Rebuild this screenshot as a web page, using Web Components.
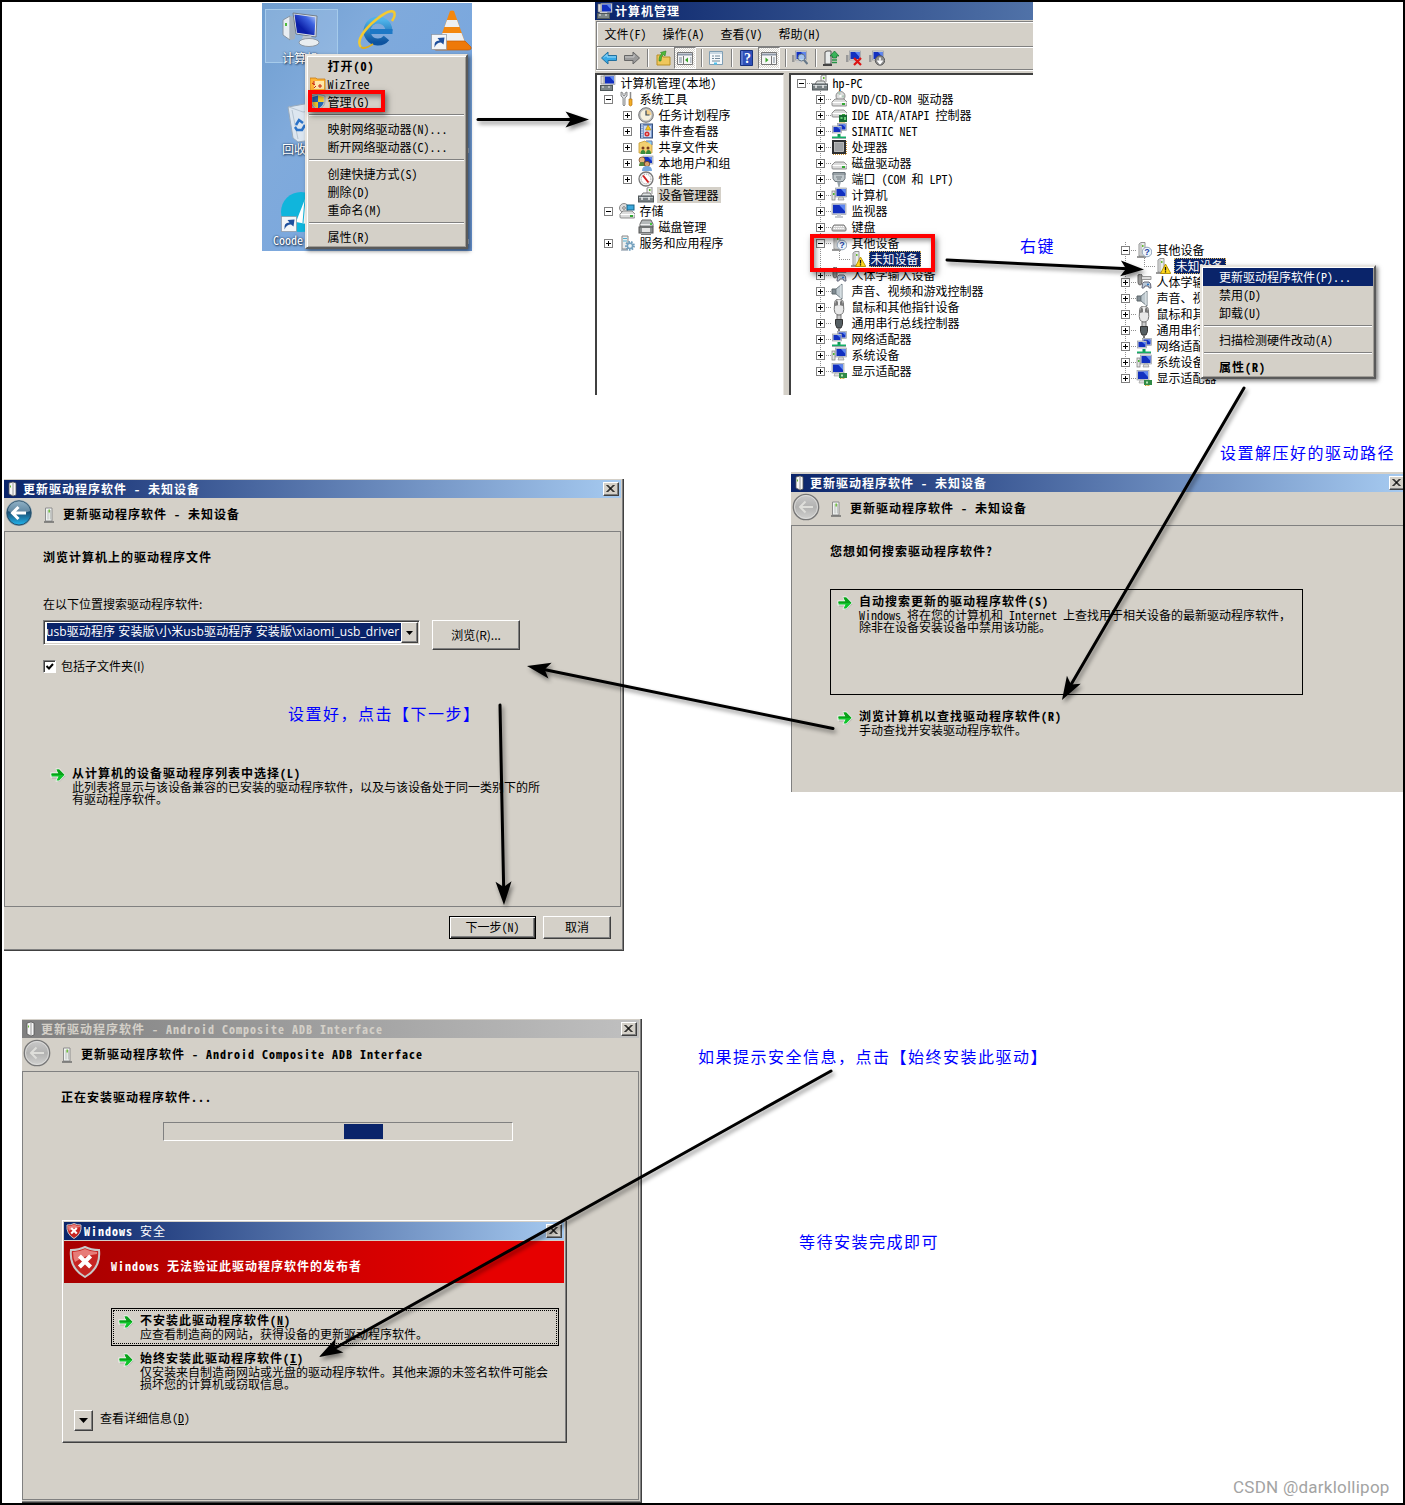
<!DOCTYPE html>
<html lang="zh-CN">
<head>
<meta charset="utf-8">
<title>更新驱动程序软件</title>
<style>
  body {
    margin: 0;
    background: #fff;
    color: #000;
    font-family: "Noto Sans CJK SC", sans-serif;
    font-size: 12px;
    font-feature-settings: "hwid";
  }
  /* hwid would squeeze the Chinese comma as well */
  .full { font-feature-settings: normal; }
</style>
</head>
<body>
<page-canvas>
  <desk-top style="left:262px;top:3px;width:210px;height:248px"></desk-top>
  <context-menu style="left:305px;top:54px;width:163px;--indent:19.500px">
    <menu-item bold>打开(O)</menu-item>
    <menu-item icon="wiztree">WizTree</menu-item>
    <menu-item icon="uac">管理(G)</menu-item>
    <menu-sep></menu-sep>
    <menu-item>映射网络驱动器(N)...</menu-item>
    <menu-item>断开网络驱动器(C)...</menu-item>
    <menu-sep></menu-sep>
    <menu-item>创建快捷方式(S)</menu-item>
    <menu-item>删除(D)</menu-item>
    <menu-item>重命名(M)</menu-item>
    <menu-sep></menu-sep>
    <menu-item>属性(R)</menu-item>
  </context-menu>

  <mmc-window style="left:595px;top:2px;width:438px;height:393px">
    <tree-view slot="left" style="--base:3px">
      <tree-item icon="mmc" noslot>计算机管理(本地)</tree-item>
      <tree-item depth="1" icon="tools" toggle="-">系统工具</tree-item>
      <tree-item depth="2" icon="clock" toggle="+">任务计划程序</tree-item>
      <tree-item depth="2" icon="events" toggle="+">事件查看器</tree-item>
      <tree-item depth="2" icon="shared" toggle="+">共享文件夹</tree-item>
      <tree-item depth="2" icon="users" toggle="+">本地用户和组</tree-item>
      <tree-item depth="2" icon="perf" toggle="+">性能</tree-item>
      <tree-item depth="2" icon="devmgr" soft>设备管理器</tree-item>
      <tree-item depth="1" icon="storage" toggle="-">存储</tree-item>
      <tree-item depth="2" icon="diskmgr">磁盘管理</tree-item>
      <tree-item depth="1" icon="services" toggle="+">服务和应用程序</tree-item>
    </tree-view>
    <tree-view slot="right" style="--base:21px">
      <tree-item icon="devmgr" toggle="-" lines="h">hp-PC</tree-item>
      <tree-item depth="1" icon="dvd" toggle="+" lines="full">DVD/CD-ROM 驱动器</tree-item>
      <tree-item depth="1" icon="ide" toggle="+" lines="full">IDE ATA/ATAPI 控制器</tree-item>
      <tree-item depth="1" icon="net" toggle="+" lines="full">SIMATIC NET</tree-item>
      <tree-item depth="1" icon="cpu" toggle="+" lines="full">处理器</tree-item>
      <tree-item depth="1" icon="disk" toggle="+" lines="full">磁盘驱动器</tree-item>
      <tree-item depth="1" icon="port" toggle="+" lines="full">端口 (COM 和 LPT)</tree-item>
      <tree-item depth="1" icon="pc" toggle="+" lines="full">计算机</tree-item>
      <tree-item depth="1" icon="monitor" toggle="+" lines="full">监视器</tree-item>
      <tree-item depth="1" icon="keyboard" toggle="+" lines="full">键盘</tree-item>
      <tree-item depth="1" icon="other" toggle="-" lines="full">其他设备</tree-item>
      <tree-item depth="2" icon="unknown" lines="half" selected>未知设备</tree-item>
      <tree-item depth="1" icon="hid" toggle="+" lines="full">人体学输入设备</tree-item>
      <tree-item depth="1" icon="sound" toggle="+" lines="full">声音、视频和游戏控制器</tree-item>
      <tree-item depth="1" icon="mouse" toggle="+" lines="full">鼠标和其他指针设备</tree-item>
      <tree-item depth="1" icon="usb" toggle="+" lines="full">通用串行总线控制器</tree-item>
      <tree-item depth="1" icon="net" toggle="+" lines="full">网络适配器</tree-item>
      <tree-item depth="1" icon="pc" toggle="+" lines="full">系统设备</tree-item>
      <tree-item depth="1" icon="display" toggle="+" lines="half">显示适配器</tree-item>
    </tree-view>
  </mmc-window>
  <mark-box style="left:308px;top:90px;width:77px;height:22px"></mark-box>
  <mark-box style="left:810px;top:234px;width:125px;height:38px"></mark-box>

  <tree-view style="left:1096px;top:242px;width:180px;--base:21px">
    <tree-item depth="1" icon="other" toggle="-" lines="full">其他设备</tree-item>
    <tree-item depth="2" icon="unknown" lines="half" selected>未知设备</tree-item>
    <tree-item depth="1" icon="hid" toggle="+" lines="full">人体学输</tree-item>
    <tree-item depth="1" icon="sound" toggle="+" lines="full">声音、视</tree-item>
    <tree-item depth="1" icon="mouse" toggle="+" lines="full">鼠标和其</tree-item>
    <tree-item depth="1" icon="usb" toggle="+" lines="full">通用串行</tree-item>
    <tree-item depth="1" icon="net" toggle="+" lines="full">网络适配</tree-item>
    <tree-item depth="1" icon="pc" toggle="+" lines="full">系统设备</tree-item>
    <tree-item depth="1" icon="display" toggle="+" lines="half">显示适配器</tree-item>
  </tree-view>
  <context-menu style="left:1200px;top:265px;width:176px;--indent:16px">
    <menu-item active>更新驱动程序软件(P)...</menu-item>
    <menu-item>禁用(D)</menu-item>
    <menu-item>卸载(U)</menu-item>
    <menu-sep></menu-sep>
    <menu-item>扫描检测硬件改动(A)</menu-item>
    <menu-sep></menu-sep>
    <menu-item bold>属性(R)</menu-item>
  </context-menu>

  <wizard-window caption="更新驱动程序软件 - 未知设备" style="left:791px;top:473px;width:612px;height:319px" cropped>
    <span slot="heading">您想如何搜索驱动程序软件?</span>
    <command-link framed style="margin:28px 0 0 38px;--px:6px;--py:4px">
      自动搜索更新的驱动程序软件(S)
      <span slot="desc">Windows 将在您的计算机和 Internet 上查找用于相关设备的最新驱动程序软件<span class="full">，</span><br>除非在设备安装设备中禁用该功能。</span>
    </command-link>
    <command-link style="margin:14px 0 0 45px">
      浏览计算机以查找驱动程序软件(R)
      <span slot="desc">手动查找并安装驱动程序软件。</span>
    </command-link>
  </wizard-window>

  <wizard-window caption="更新驱动程序软件 - 未知设备" style="left:4px;top:479px;width:620px;height:472px" live>
    <span slot="heading">浏览计算机上的驱动程序文件</span>
    <browse-form></browse-form>
    <command-link style="margin:90px 0 0 45px">
      从计算机的设备驱动程序列表中选择(L)
      <span slot="desc">此列表将显示与该设备兼容的已安装的驱动程序软件<span class="full">，</span>以及与该设备处于同一类别下的所<br>有驱动程序软件。</span>
    </command-link>
    <push-button slot="footer" primary style="width:87px">下一步(N)</push-button>
    <push-button slot="footer" style="width:68px">取消</push-button>
  </wizard-window>

  <wizard-window caption="更新驱动程序软件 - Android Composite ADB Interface" style="left:22px;top:1019px;width:620px;height:484px" inactive>
    <span slot="heading">正在安装驱动程序软件...</span>
    <progress-bar style="margin:15px 0 0 140px"></progress-bar>
  </wizard-window>
  <security-dialog style="left:62px;top:1220px;width:505px;height:223px"></security-dialog>

  <flow-arrows></flow-arrows>
  <note-text style="left:1020px;top:233px">右键</note-text>
  <note-text style="left:1220px;top:440px">设置解压好的驱动路径</note-text>
  <note-text style="left:288px;top:701px">设置好，点击【下一步】</note-text>
  <note-text style="left:698px;top:1044px">如果提示安全信息，点击【始终安装此驱动】</note-text>
  <note-text style="left:799px;top:1229px">等待安装完成即可</note-text>
  <water-mark style="left:1233px;top:1476px">CSDN @darklollipop</water-mark>
</page-canvas>

<script>
// 16x16 glyphs, shared by trees, menus and the toolbar
const screen = (x, y, w, h) => `<rect x="${x}" y="${y}" width="${w}" height="${h}" fill="#d3d7dc" stroke="#8d9299" stroke-width=".6"/><rect x="${x + 1}" y="${y + 1}" width="${w - 2}" height="${h - 2}" fill="#1230c0"/><path d="M${x + w / 2} ${y + 1}h${w / 2 - 1}v${h - 4}z" fill="#5d86f0"/>`;
const drive = (y) => `<path d="M1 ${y + 3}l3-3h9l3 3v3q0 1-1 1H2q-1 0-1-1z" fill="#dcdcdc" stroke="#777" stroke-width=".8"/><path d="M1.500 ${y + 3.500}h14" stroke="#fff"/><rect x="11" y="${y + 4}" width="3" height="2" fill="#35a835"/>`;
const tower = (x) => `<path d="M${x} 2l2-1.500h4V14h-6z" fill="#e9ecec" stroke="#888" stroke-width=".9"/><path d="M${x + 2} 1.500V13" stroke="#aaa"/><rect x="${x + 3}" y="3" width="1.500" height="2" fill="#67bd31"/><path d="M${x - 2} 15h9" stroke="#777" stroke-width="1.500"/>`;
const devmgr = `<path d="M9 7V1l2-1h3v7" fill="#eee" stroke="#777" stroke-width=".8"/><rect x="11" y="2" width="1.500" height="2" fill="#5eb52a"/><path d="M3 9l2-3h7l2 3" fill="#e0e4e4" stroke="#777"/><rect x=".5" y="9" width="15" height="6" fill="#798184" stroke="#50575a"/><path d="M1 10.500h14" stroke="#bfc7c9"/><path d="M4 10v3M11 10v3" stroke="#eee" stroke-width="1.500"/>`;
const greenArrow = `<path d="M2 7h6.500L8 3.500l2.500-.5 5 6-6 6h-2l1-3.500H2z" fill="#555" opacity=".3"/><path d="M.5 5.500H7L5.500 1.500h4L15.500 8l-6 6.500h-4L7 10.500H.5z" fill="#fff" opacity=".8"/><path d="M1.500 6.500h7L6.500 2.500h2.700L14.500 8l-5.300 5.500H6.500l2-4h-7z" fill="#0fc52b"/><path d="M1.500 6.500h7L6.500 2.500h2.700L14.500 8h-13z" fill="#0aa01a"/>`;
const ICONS = {
  mmc: `${screen(4, 0.5, 11, 9)}<rect x="1" y="1" width="3" height="8" fill="#ddd" stroke="#777" stroke-width=".6"/><path d="M3 9h7l1 2H2z" fill="#ccc"/><rect x=".5" y="10.500" width="12" height="5" fill="#7c8688" stroke="#4e5759"/><path d="M3 11v2M9 11v2" stroke="#eee"/>`,
  tools: `<path d="M2 1v4l2 2v7q1 2 2 0V7l2-2V1L6 2v2L5 5 4 4V2z" fill="#d7dadd" stroke="#777" stroke-width=".8"/><path d="M11.500 1v7" stroke="#8b8b8b" stroke-width="1.500"/><path d="M10 8h3v6q-1.500 2-3 0z" fill="#f2ad26" stroke="#b87412" stroke-width=".7"/>`,
  clock: `<circle cx="8" cy="8" r="7.300" fill="#b8babc" stroke="#777"/><circle cx="8" cy="8" r="5.500" fill="#f5f0df"/><path d="M8 2.500A5.500 5.500 0 0 1 13.500 8H8z" fill="#f3cf8c"/><path d="M8 3.500V8h3.500" fill="none" stroke="#345" stroke-width="1.200"/>`,
  events: `<rect x="2.500" y="1" width="12" height="14" fill="#7f9cce" stroke="#35507f"/><path d="M4 1v14" stroke="#fff" stroke-dasharray="1.500 1"/><rect x="6" y="3" width="7" height="11" fill="#ccd9f0"/><path d="M10 2l3 5H7.500z" fill="#f7c51d" stroke="#93700a" stroke-width=".5"/><circle cx="9" cy="11" r="2.500" fill="#d52c2c"/><path d="M8 11h2" stroke="#fff"/>`,
  shared: `<path d="M1 4l6-2 1 1h6v11H1z" fill="#f3d070" stroke="#c39a34" stroke-width=".8"/><path d="M8 2h6v4" fill="#8cd2f2" stroke="#67a"/><circle cx="5" cy="9" r="1.500" fill="#7a3b20"/><circle cx="10" cy="9" r="1.500" fill="#7a3b20"/><path d="M2.500 15q0-4 2.500-4t2.500 4zM8 15q0-4 2.500-4t2.500 4z" fill="#3a8b3c"/>`,
  users: `${screen(5, 1, 10, 8)}<circle cx="4" cy="5" r="3" fill="#e7b37d" stroke="#70401c" stroke-width=".7"/><path d="M1 11q0-4 3-4t4 4z" fill="#53873c"/><circle cx="9" cy="9" r="2.700" fill="#d9a06b" stroke="#5d3317" stroke-width=".7"/><path d="M4 16q0-5 5-5t5 5z" fill="#77a8de"/>`,
  perf: `<circle cx="8" cy="8" r="7" fill="#f3f3f3" stroke="#777" stroke-width="1.300"/><circle cx="8" cy="8" r="4.800" fill="#fff" stroke="#999" stroke-dasharray="1 1"/><path d="M5 4.500l5.500 7" stroke="#d01f1f" stroke-width="2"/>`,
  devmgr,
  storage: `<circle cx="5" cy="5" r="4.500" fill="#ddd" stroke="#888"/><circle cx="5" cy="5" r="1.300" fill="#fff" stroke="#777"/><rect x="8" y="2" width="7" height="5" fill="#3ba8dc" stroke="#176387"/>${drive(8)}`,
  diskmgr: `<path d="M2 5l2-4h9l2 4v3H2z" fill="#b4b8b9" stroke="#666"/><path d="M2.500 5.500h12" stroke="#eee"/><rect x="12" y="4" width="2" height="2" fill="#45c83c"/><rect x="1" y="8" width="14" height="6" fill="#8b9091" stroke="#555"/><path d="M4 9h8v4H4z" fill="#e6e6e6"/><path d="M3 15.500h10" stroke="#777"/>`,
  services: `<path d="M3 1h6v13H3z" fill="#eceeee" stroke="#888"/><path d="M4 3.500h4M4 6h4" stroke="#53afd0"/><path d="M2 15h7" stroke="#789"/><circle cx="11" cy="10.800" r="3.600" fill="none" stroke="#6e9dbd" stroke-width="2.600" stroke-dasharray="1.500 1"/><circle cx="11" cy="10.800" r="2.600" fill="#eff6fa" stroke="#77a2be" stroke-width="1.500"/>`,
  dvd: `<circle cx="9.500" cy="5" r="4.500" fill="#ddd" stroke="#888"/><path d="M9.500 5l-3-3 3-1.500zM9.500 5l4-1-1 3z" fill="#aec8b8"/><circle cx="9.500" cy="5" r="1.200" fill="#fff"/>${drive(8)}`,
  ide: `${drive(3)}<rect x="8" y="8" width="8" height="7" fill="#176b32"/><path d="M9.500 10h2v2h-2zM13 10h2v3h-2z" fill="#6acb78"/><path d="M9 15v1M11 15v1M13 15v1" stroke="#d2a526"/>`,
  net: `${screen(6.5, 0.5, 9, 7)}${screen(1.500, 3, 9, 7)}<path d="M8 11v3" stroke="#0b9a52" stroke-width="3"/><path d="M1 14.500h14" stroke="#14ae67" stroke-width="2"/><path d="M1 15.500h14" stroke="#9aa"/>`,
  cpu: `<rect x="1" y="1" width="14" height="14" fill="#2d2f31"/><rect x="3.500" y="3.500" width="9" height="9" fill="#9fa2a4" stroke="#dadada" stroke-width=".7"/><path d="M2 15.500h13M15.500 2v13" stroke="#c98d2c" stroke-dasharray="1 1"/>`,
  disk: drive(7),
  port: `<path d="M2 1.500h12v6l-2 3H4l-2-3z" fill="#bfc7cb" stroke="#69737a"/><path d="M1 3h14M5 6h6M6 8h4" stroke="#707a80"/><path d="M6 10.500h4L8.500 16h-1z" fill="#98a3a9"/>`,
  pc: `<rect x="1" y="4" width="3" height="9" fill="#e4e4e4" stroke="#777" stroke-width=".7"/><rect x="2" y="6" width="1.500" height="2" fill="#47b731"/>${screen(4.500, 1, 11, 9)}<path d="M8 10h4l1 3H7z" fill="#d7d7d7" stroke="#888" stroke-width=".6"/>`,
  monitor: `${screen(1, 0.800, 14, 10.500)}<path d="M6 11h4v2h2v2H4v-2h2z" fill="#c7cbd0"/>`,
  keyboard: `<path d="M1 9l2-3h10l2 3v2q0 1-1 1H2q-1 0-1-1z" fill="#ccc" stroke="#777"/><path d="M3 7.500h10M2.500 9.500h11" stroke="#fff" stroke-dasharray="1.500 .7"/>`,
  other: `${tower(3)}<circle cx="11" cy="10" r="4.800" fill="#eef5fb" stroke="#92a4b8"/><text x="11" y="13.300" text-anchor="middle" font-size="9" font-weight="bold" fill="#1b43a8" font-family="Liberation Sans">?</text>`,
  unknown: `${tower(3)}<path d="M10.500 6l5.300 9.500H5.500z" fill="#ffd71e" stroke="#b08f00" stroke-width=".9"/><path d="M10.500 9v3.500M10.500 13.300v1.200" stroke="#111" stroke-width="1.300"/>`,
  hid: `<path d="M2 1q3-2 4 0v7q0 3-2 3T2 8z" fill="#999" stroke="#666"/><path d="M6 2.500h9v3H6" fill="#ddd" stroke="#999"/><path d="M6 14q0-6 2-6h5q2 0 2 6-2 1-3-2H9q-1 3-3 2z" fill="#b8c8d8" stroke="#667"/><circle cx="12" cy="10.500" r="1" fill="#276fc3"/>`,
  sound: `<path d="M1 6h4v5H1z" fill="#808b92" stroke="#5b6469"/><path d="M5 6l6-5v15l-6-5z" fill="#bdc8ce" stroke="#748088"/><path d="M10 2v13" stroke="#eef4f6"/>`,
  mouse: `<path d="M8 0q5 0 4.500 6 1.500 10-4.500 10T3.500 6Q3 0 8 0z" fill="#e8e8e8" stroke="#777"/><path d="M4 7q0-5 2-6l2 5zM12 7q0-5-2-6L8 6z" fill="#777"/><path d="M8 2v4" stroke="#eee" stroke-width="2"/>`,
  usb: `<path d="M6 0h4v5H6z" fill="#ccc" stroke="#777"/><path d="M4.500 4.500h7v5L10 13H6l-1.500-3.500z" fill="#555e62" stroke="#333"/><path d="M8 13v3" stroke="#777" stroke-width="2"/>`,
  display: `${screen(1, 0.500, 12, 9.500)}<path d="M4 10h5v3H3z" fill="#ddd" stroke="#999" stroke-width=".6"/><rect x="8" y="10" width="8" height="5" fill="#318a46"/><rect x="10" y="11.500" width="2" height="2" fill="#b8e6b6"/><path d="M9 15.500h5" stroke="#d4a426" stroke-dasharray="1 .6"/>`,
  wiztree: `<path d="M0 2h6l1 1h8v12H0z" fill="#ffb436" stroke="#c77b14" stroke-width=".8"/><path d="M4 5h10v8H4z" fill="#ffe9ab"/><path d="M2 7l3 2M4 5v4M8 10h4M10 8v4M4 12l2-2" stroke="#c62314"/>`,
  uac: `<path d="M8 0l7 2v5q0 6-7 9-7-3-7-9V2z" fill="#c7ccd2" stroke="#858b91" stroke-width=".6"/><path d="M8 1.500V8H2.300V3z" fill="#2465b4"/><path d="M8 1.500V8h5.700V3z" fill="#f4cb32"/><path d="M8 8v6.700Q3 12 2.300 8z" fill="#f4cb32"/><path d="M8 8v6.700Q13 12 13.700 8z" fill="#2465b4"/>`,
  back: `<path d="M.5 8L7 2v3.500h8.500v5H7V14z" fill="#37a9e6" stroke="#23709e"/><path d="M3 7.500l3-3V7h9" fill="none" stroke="#9fdcfa"/>`,
  forward: `<path d="M15.500 8L9 2v3.500H.5v5H9V14z" fill="#9b9b9b" stroke="#666"/><path d="M1 7h9V4.500" fill="none" stroke="#c9c9c9"/>`,
  folderup: `<path d="M2 5h5l1 2h7v8H2z" fill="#efc75c" stroke="#b98f25"/><path d="M4 11q0-6 3-7L5.500 2.500 11 1l-1 5-1.500-1.500Q6 6 6 11z" fill="#50b93c" stroke="#2a8420" stroke-width=".6"/>`,
  panel: `<path d="M.5 2.500h15v12H.5z" fill="#f7f7f7" stroke="#777"/><path d="M1 4.500h14" stroke="#8e99a8" stroke-width="2"/><path d="M6.500 6v8" stroke="#777"/><path d="M11 7.500v5l-3-2.500z" fill="#39a62b"/><path d="M2 8h3M2 10h3M2 12h3M13 8h1.500M13 10h1.500M13 12h1.500" stroke="#7a8a99"/>`,
  panelr: `<path d="M.5 2.500h15v12H.5z" fill="#f7f7f7" stroke="#777"/><path d="M1 4.500h14" stroke="#8e99a8" stroke-width="2"/><path d="M10.500 6v8" stroke="#777"/><path d="M4.500 7.500v5l3-2.500z" fill="#39a62b"/><path d="M12 8h2M12 10h2M12 12h2" stroke="#7a8a99"/>`,
  props: `<path d="M1.500 1.500h13v13h-13z" fill="#f5f9fc" stroke="#7f9eb4"/><path d="M2 3h12" stroke="#9db8cb"/><path d="M4 6h2M7 6h5M4 8.500h2M7 8.500h5M4 11h8" stroke="#71889a"/><path d="M6 13.500h3" stroke="#4ec3ee" stroke-width="2"/>`,
  help: `<path d="M1.500 .5h12v15h-12z" fill="#2f50b9" stroke="#16307e"/><path d="M3 1v14" stroke="#86a0e4"/><text x="8.500" y="13" text-anchor="middle" font-size="14" font-weight="bold" fill="#fff" font-family="Liberation Serif">?</text>`,
  scan: `<rect x="0" y="5" width="2.500" height="7" fill="#999"/>${screen(3.500, 1, 11, 9)}<path d="M4 12h6" stroke="#ccc" stroke-width="2"/><circle cx="9.500" cy="7.500" r="3.500" fill="#bddcf7" fill-opacity=".85" stroke="#678"/><path d="M12 10l3.500 4" stroke="#678" stroke-width="2"/>`,
  update: `<path d="M2 2l2-1h4v13H2z" fill="#e8ebeb" stroke="#555"/><path d="M0 15h9" stroke="#444" stroke-width="2"/><path d="M11.500 1l4.500 5h-2.500v2h-4V6H7z" fill="#38b45a" stroke="#136a2d" stroke-width=".7"/><path d="M9 10h5M9 12.500h5" stroke="#259347" stroke-width="1.500"/>`,
  disable: `<rect x="0" y="5" width="2.500" height="7" fill="#999"/>${screen(3.500, 1, 11, 9)}<path d="M4 12h6" stroke="#ccc" stroke-width="2"/><path d="M8 8l7 7M15 8l-7 7" stroke="#dc1414" stroke-width="2.200"/>`,
  uninstall: `<rect x="0" y="5" width="2.500" height="7" fill="#999"/>${screen(3.500, 1, 11, 9)}<circle cx="11" cy="10.500" r="4.700" fill="#8d8d8d" stroke="#5b5b5b"/><path d="M11 7.500v5M8.500 10.500l2.500 3 2.500-3" stroke="#fff" stroke-width="1.500" fill="none"/>`,
  device: `<path d="M4.500 1h6.500v13H4.500z" fill="#f1f3f2" stroke="#8d8d8d"/><path d="M7 3v9.500M9.300 3v9.500" stroke="#a9adab" stroke-width=".8"/><path d="M8.200 2.500v3" stroke="#67bd31" stroke-width="1.400"/><path d="M3 15h10" stroke="#666" stroke-width="1.400"/>`,
  caption: `<path d="M5 2l4-1 3 1v12l-3 1-4-2z" fill="#f7f7f7" stroke="#555" stroke-width=".8"/><path d="M9 2v12" stroke="#999"/><path d="M6.500 4.500v2" stroke="#67bd31"/>`,
  green: greenArrow,
  shield: `<path d="M8 .5Q11 2 15 2q1 9-7 13.500Q0 11 1 2q4 0 7-1.500z" fill="#c72522" stroke="#c9c9c9" stroke-width="1"/><path d="M8 1.500Q5 3 2 3q0 3 1 5 4-3 11-4V3Q11 3 8 1.500z" fill="#e77c78"/><path d="M5.200 5l5.600 5.500M10.800 5L5.200 10.500" stroke="#fff" stroke-width="2.100"/>`
};
const svg = (name, size = 16, cls = '') =>
  `<svg class="${cls}" width="${size}" height="${size}" viewBox="0 0 16 16">${ICONS[name] || ''}</svg>`;

// Base class: renders view() into an open shadow root
class ShadowElement extends HTMLElement {
  connectedCallback() {
    if (this.shadowRoot) return;
    this.attachShadow({ mode: 'open' });
    this.shadowRoot.innerHTML = `<style>:host{display:block;box-sizing:border-box}*{box-sizing:border-box}svg{display:block;flex:none}</style>${this.view()}`;
  }
}

class PageCanvas extends ShadowElement {
  view() {
    return `
      <style>
        :host { position: relative; width: 1405px; height: 1505px; overflow: hidden; background: #fff; }
        ::slotted(*) { position: absolute; }
        .frame { position: absolute; inset: 0; border: 2px solid #000; pointer-events: none; }
      </style>
      <slot></slot><div class="frame"></div>`;
  }
}

class DeskTop extends ShadowElement {
  view() {
    const shortcut = `<rect width="15" height="15" fill="#f3f5f8" stroke="#8a93a0" stroke-width=".7"/><path d="M3 13Q2 6 8 6L6 3.500 13 3l-1 7-2.500-2Q5 8 3 13z" fill="#1e4f9d"/>`;
    return `
      <style>
        :host { position: relative; overflow: hidden; background: linear-gradient(125deg, #6f9ed0 0%, #80aadb 30%, #7ba8de 60%, #6795d4 100%); }
        svg { position: absolute; inset: 0; }
        span { position: absolute; color: #fff; line-height: 14px; text-shadow: 1px 1px 2px #1b3556, 0 0 2px #1b3556; }
        .sel { position: absolute; left: 3px; top: 6px; width: 73px; height: 54px; border: 1px solid #a6cbeb; background: rgba(190,215,240,.28); }
      </style>
      <div class="sel"></div>
      <svg width="210" height="248">
        <defs>
          <linearGradient id="scr" x1="0" y1="1" x2="1" y2="0"><stop offset=".35" stop-color="#0b1fa8"/><stop offset=".7" stop-color="#3d63e0"/><stop offset="1" stop-color="#b9d0fb"/></linearGradient>
          <linearGradient id="ie" x2="0" y2="1"><stop offset="0" stop-color="#4fb4ea"/><stop offset="1" stop-color="#0d539f"/></linearGradient>
        </defs>
        <path d="M21 17l7-4v24l-7-5z" fill="#e8edf2" stroke="#8794a2"/><path d="M28 13l5 1v22l-5 1z" fill="#a3afba"/><rect x="23" y="20" width="2" height="3" fill="#4fbb3c"/>
        <path d="M31 10l24 3-1 21-20-3z" fill="#dfe5ea" stroke="#727d89"/><path d="M32.500 11.500l21 2.700-1 18-17.500-2.500z" fill="url(#scr)"/>
        <path d="M41 33h8l2 5-12 1z" fill="#b9c3cc"/><ellipse cx="47" cy="39.500" rx="10" ry="4" fill="#e9edf0" stroke="#8d98a4"/>
        <path d="M127 28a11 11 0 1 0-2.500 7" fill="none" stroke="url(#ie)" stroke-width="7"/><path d="M108 28.500h22.500" stroke="#1d78c6" stroke-width="5"/>
        <path d="M99 44q-6-7 10-23Q127 5 132 9q2 3-2 9" fill="none" stroke="#f4ca30" stroke-width="2.500"/><path d="M99 44q3 3 12-3" fill="none" stroke="#dfae1c" stroke-width="2"/>
        <path d="M188 8q2-1 4 0l12 34h-28z" fill="#f3870e"/><path d="M185 17h10l2.500 7h-15zM180.500 30h19l3 8h-25z" fill="#eef0f2"/><path d="M177 38h26l6 6v2q-1 1-3 1h-32q-3 0-3-3z" fill="#ee7909" stroke="#c35b04" stroke-width=".7"/>
        <g transform="translate(169.500 31.500)">${shortcut}</g>
        <path d="M26 104l22-4 13 6-5 30-20 3-5-4z" fill="#dce6f0" stroke="#98aabc"/><path d="M27 104l14 5 20-3M30 107l6 29M46 108l-2 28" stroke="#b7c5d2" fill="none"/>
        <path d="M34 122l3-5 4 3M43 122l-3 5h-5l-2-3" fill="none" stroke="#2b73c8" stroke-width="2.500"/>
        <circle cx="39" cy="209" r="20" fill="#10b5dc"/><path d="M34 219l9-23 7 26z" fill="#fff"/><path d="M43 196l-2 24" stroke="#10b5dc"/>
        <g transform="translate(19.500 213.500)">${shortcut}</g>
        <path d="M206 145v5M206 236v5" stroke="#fff"/>
      </svg>
      <span style="left:20px;top:48px">计算机</span>
      <span style="left:20px;top:139px">回收站</span>
      <span style="left:11px;top:230px">Coode</span>`;
  }
}

class ContextMenu extends ShadowElement {
  view() {
    return `
      <style>
        :host { background: #d4d0c8; padding: 1px; border: 2px solid; border-color: #e8e5df #5a5a5a #5a5a5a #e8e5df; box-shadow: inset 1px 1px #fff, inset -1px -1px #a09d97, 2px 2px 4px rgba(0,0,0,.5); }
      </style>
      <slot></slot>`;
  }
}

class MenuItem extends ShadowElement {
  view() {
    return `
      <style>
        :host { position: relative; display: flex; align-items: center; height: 18px; line-height: 17px; padding: 0 0 1px var(--indent); white-space: pre; }
        :host([bold]) { font-weight: bold; letter-spacing: 1px; }
        :host([active]) { background: #0a246a; color: #fff; }
        svg { position: absolute; left: 2px; }
      </style>
      ${this.hasAttribute('icon') ? svg(this.getAttribute('icon')) : ''}<slot></slot>`;
  }
}

class MenuSep extends ShadowElement {
  view() {
    return `<style>:host { height: 9px; padding: 3px 1px 0; } i { display: block; border-top: 1px solid #808080; border-bottom: 1px solid #fff; }</style><i></i>`;
  }
}

class TreeView extends ShadowElement {
  view() {
    return `<style>:host { background: transparent; }</style><slot></slot>`;
  }
}

class TreeItem extends ShadowElement {
  view() {
    const depth = Number(this.getAttribute('depth') || 0);
    const noslot = this.hasAttribute('noslot');
    const lines = this.getAttribute('lines');
    const toggle = this.getAttribute('toggle');
    return `
      <style>
        :host { display: flex; align-items: center; position: relative; height: 16px; line-height: 16px; white-space: pre; padding-left: calc(var(--base) + ${depth * 19 - (noslot ? 0 : 15)}px); }
        .slot { width: 15px; height: 16px; flex: none; position: relative; display: flex; align-items: center; }
        .h, .v { position: absolute; background: repeating-linear-gradient(var(--dir), #909090 0 1px, transparent 1px 2px); }
        .v { --dir: 180deg; left: 4px; top: 0; width: 1px; height: ${lines === 'half' ? 8 : 16}px; }
        .h { --dir: 90deg; left: 4px; top: 8px; width: 11px; height: 1px; }
        .box { position: relative; width: 9px; height: 9px; border: 1px solid #808080; background: #fff; }
        .box::before, .box.plus::after { content: ""; position: absolute; background: #000; left: 1px; top: 3px; width: 5px; height: 1px; }
        .box.plus::after { left: 3px; top: 1px; width: 1px; height: 5px; }
        .label { margin-left: 3px; padding: 0 2.500px 0 1.500px; height: 16px; line-height: 16px; }
        :host([soft]) .label { background: #d4d0c8; }
        :host([selected]) .label { background: #0a246a; color: #fff; outline: 1px dotted #d8b35c; outline-offset: -1px; }
      </style>
      ${noslot ? '' : `<div class="slot">
        ${lines && lines !== 'h' ? '<i class="v"></i>' : ''}
        ${lines ? '<i class="h"></i>' : ''}
        ${lines && depth === 2 ? '<i class="v" style="left:-15px;height:16px"></i>' : ''}
        ${toggle ? `<div class="box ${toggle === '+' ? 'plus' : ''}"></div>` : ''}
      </div>`}
      ${svg(this.getAttribute('icon'))}<span class="label"><slot></slot></span>`;
  }
}

class MmcWindow extends ShadowElement {
  view() {
    return `
      <style>
        :host { display: flex; flex-direction: column; background: #d4d0c8; overflow: hidden; }
        .title { height: 18px; display: flex; align-items: center; gap: 2px; padding: 0 0 1px 2px; background: linear-gradient(90deg, #0a246a, #5072a8); color: #fff; font-weight: bold; letter-spacing: 1px; }
        .menu { display: flex; gap: 16px; height: 25px; line-height: 23px; margin: 1px 0 0 1px; padding-left: 7.500px; border-top: 1px solid #808080; border-left: 1px solid #808080; box-shadow: inset 1px 1px #fff; }
        .tools { display: flex; align-items: center; height: 24px; margin-left: 1px; padding-left: 4px; border: solid #808080; border-width: 1px 0 1px 1px; box-shadow: inset 1px 1px #fff, 0 1px #fff; }
        .tools svg { margin-right: 7px; }
        .tools i { width: 2px; height: 18px; border-left: 1px solid #808080; border-right: 1px solid #fff; margin-right: 5.500px; }
        .on { width: 22px; height: 22px; padding: 2px; margin: 0 5px 0 -4px; border: 1px solid; border-color: #808080 #fff #fff #808080; background: repeating-conic-gradient(#fff 0 25%, #d8d5ce 0 50%) 0 0 / 2px 2px; }
        .on svg { margin: 0; }
        .panes { flex: 1; display: flex; gap: 5px; margin-top: 3px; min-height: 0; }
        .pane { background: #fff; border: solid #404040; border-width: 2px 0 0 2px; overflow: hidden; }
        .left { width: 189px; border-right: 1px solid #e9e6e1; }
        .right { flex: 1; }
      </style>
      <div class="title">${svg('mmc')}<span>计算机管理</span></div>
      <div class="menu"><span>文件(F)</span><span>操作(A)</span><span>查看(V)</span><span>帮助(H)</span></div>
      <div class="tools">
        ${svg('back')}${svg('forward')}<i></i>${svg('folderup')}
        <div class="on">${svg('panel')}</div><i></i>${svg('props')}<i></i>${svg('help')}
        <div class="on">${svg('panelr')}</div><i></i>${svg('scan')}<i></i>${svg('update')}${svg('disable')}${svg('uninstall')}
      </div>
      <div class="panes">
        <div class="pane left"><slot name="left"></slot></div>
        <div class="pane right"><slot name="right"></slot></div>
      </div>`;
  }
}

class CloseButton extends ShadowElement {
  view() {
    return `
      <style>
        :host { flex: none; width: 16px; height: 14px; background: #d4d0c8; border: 1px solid; border-color: #fff #404040 #404040 #fff; box-shadow: inset -1px -1px #808080; }
      </style>
      <svg width="14" height="12"><path d="M3 2.500l7 7M4 2.500l7 7M10 2.500l-7 7M11 2.500l-7 7" transform="translate(-.5 -.5)" stroke="#000"/></svg>`;
  }
}

class WizardWindow extends ShadowElement {
  view() {
    const caption = this.getAttribute('caption');
    const live = this.hasAttribute('live');
    const disc = live
      ? `<circle cx="14" cy="14" r="13" fill="#7f98a8"/><circle cx="14" cy="14" r="12" fill="url(#g)" stroke="#28506a"/><path d="M3 12a11 10 0 0 1 22 0q-11 5-22 0z" fill="#fff" opacity=".3"/><path d="M21 14H8M13.500 8L7.500 14l6 6" fill="none" stroke="#fff" stroke-width="3"/>`
      : `<circle cx="14" cy="14" r="12.700" fill="url(#g)" stroke="#777" stroke-width="1.300"/><circle cx="14" cy="14" r="11.500" fill="none" stroke="#e1e1df" stroke-width=".8"/><path d="M21 14H8M13.500 8.500L8 14l5.500 5.500" fill="none" stroke="#dededa" stroke-width="2"/>`;
    const stops = live
      ? `<stop offset="0" stop-color="#5f8fac"/><stop offset=".48" stop-color="#1b5278"/><stop offset="1" stop-color="#22b5ee"/>`
      : `<stop offset="0" stop-color="#cacaca"/><stop offset=".5" stop-color="#b2b2b1"/><stop offset="1" stop-color="#d2d2d0"/>`;
    return `
      <style>
        :host { display: flex; flex-direction: column; background: #d4d0c8; padding: 1px 3px 3px 0; box-shadow: inset -1px -1px #404040, inset -2px -2px #808080; }
        :host([cropped]) { padding: 1px 0 0; box-shadow: 0 -1px #d4d0c8; overflow: hidden; }
        .title { height: 18px; flex: none; display: flex; align-items: center; padding: 0 2px 0 0; background: linear-gradient(90deg, #0a246a, #a6caf0); color: #fff; }
        :host([inactive]) .title { background: linear-gradient(90deg, #808080, #c0c0c0); color: #d4d0c8; }
        :host([cropped]) .title { padding: 0; }
        :host([cropped]) close-button { margin-right: -2px; }
        b { letter-spacing: 1px; white-space: pre; padding-bottom: 2px; }
        .title svg { margin: 0 3px 0 0; }
        .title b { flex: 1; }
        .head { height: 33px; flex: none; display: flex; align-items: center; }
        .head .disc { margin: -4px 0 0 .5px; }
        .head .dev { margin: 0 6px 0 8.500px; }
        .body { flex: 1; border: 1px solid #808080; padding-top: 15px; display: flex; flex-direction: column; align-items: flex-start; }
        :host([cropped]) .body { border-right: 0; border-bottom: 0; }
        .heading { font-weight: bold; letter-spacing: 1px; line-height: 20px; margin-left: 38px; white-space: pre; }
        .foot { display: flex; justify-content: flex-end; gap: 7px; padding: 9px 10px 0 0; height: 41px; }
      </style>
      <div class="title">${svg('caption')}<b>${caption}</b><close-button></close-button></div>
      <div class="head">
        <svg class="disc" width="28" height="28" viewBox="0 0 28 28"><defs><linearGradient id="g" x2="0" y2="1">${stops}</linearGradient></defs>${disc}</svg>
        ${svg('device', 16, 'dev')}<b>${caption}</b>
      </div>
      <div class="body"><span class="heading"><slot name="heading"></slot></span><slot></slot></div>
      ${live ? '<div class="foot"><slot name="footer"></slot></div>' : ''}`;
  }
}

class PushButton extends ShadowElement {
  view() {
    return `
      <style>
        :host { display: flex; align-items: center; justify-content: center; height: 23px; padding-bottom: 2px; background: #d4d0c8; border: 1px solid; border-color: #fff #404040 #404040 #fff; box-shadow: inset -1px -1px #808080; white-space: pre; }
        :host([primary]) { border-color: #000; box-shadow: inset 1px 1px #fff, inset -1px -1px #404040, inset -2px -2px #808080; }
      </style>
      <slot></slot>`;
  }
}

class CommandLink extends ShadowElement {
  view() {
    return `
      <style>
        :host { display: flex; gap: 6px; padding: var(--py, 0) 0 0 var(--px, 0); white-space: nowrap; }
        :host([framed]) { border: 1px solid #000; width: 473px; height: 106px; }
        svg { margin-top: 1px; }
        .name { font-weight: bold; letter-spacing: 1px; line-height: 14px; }
        .desc { line-height: 12px; padding-top: 1px; }
      </style>
      ${svg('green')}
      <div><div class="name"><slot></slot></div><div class="desc"><slot name="desc"></slot></div></div>`;
  }
}

class BrowseForm extends ShadowElement {
  view() {
    return `
      <style>
        :host { margin: 28px 0 0 38px; font-feature-settings: normal; }
        .row { display: flex; align-items: flex-start; gap: 12px; margin-top: 7px; }
        .combo { width: 377px; height: 25px; background: #fff; border: 1px solid; border-color: #808080 #fff #fff #808080; box-shadow: inset 1px 1px #404040, inset -1px -1px #d4d0c8; padding: 1px 1px 1px 3px; display: flex; justify-content: space-between; }
        .value { width: 354px; height: 18px; margin-top: 1px; line-height: 17px; text-indent: -1px; background: #0a246a; color: #fff; white-space: pre; overflow: hidden; font-family: "Open Sans", "Noto Sans CJK SC", sans-serif; letter-spacing: .1px; }
        .drop { width: 17px; height: 21px; display: flex; align-items: center; justify-content: center; background: #d4d0c8; border: 1px solid; border-color: #fff #404040 #404040 #fff; box-shadow: inset -1px -1px #808080; }
        .label { line-height: 18px; }
        push-button { width: 88px; height: 30px; }
        .check { display: flex; align-items: center; gap: 5px; margin-top: 6px; line-height: 20px; }
        .check i { width: 13px; height: 13px; background: #fff; border: 1px solid; border-color: #808080 #fff #fff #808080; box-shadow: inset 1px 1px #404040; }
      </style>
      <div class="label">在以下位置搜索驱动程序软件:</div>
      <div class="row">
        <div class="combo"><span class="value">usb驱动程序 安装版\\小米usb驱动程序 安装版\\xiaomi_usb_driver</span><span class="drop"><svg width="7" height="4"><path d="M0 0h7L3.500 4z"/></svg></span></div>
        <push-button>浏览(R)...</push-button>
      </div>
      <div class="check"><i><svg width="11" height="11"><path d="M2.500 5l2.500 2.500 4-4.500" fill="none" stroke="#000" stroke-width="2"/></svg></i><span>包括子文件夹(I)</span></div>`;
  }
}

class ProgressBar extends ShadowElement {
  view() {
    return `
      <style>
        :host { width: 350px; height: 19px; padding: 1px 0 1px 180px; border: 1px solid; border-color: #808080 #fff #fff #808080; }
        i { display: block; width: 39px; height: 15px; background: #0a246a; }
      </style>
      <i></i>`;
  }
}

class SecurityDialog extends ShadowElement {
  view() {
    return `
      <style>
        :host { background: #d4d0c8; border: 1px solid; border-color: #fff #404040 #404040 #fff; box-shadow: inset -1px -1px #808080; padding: 1px 2px 1px 1px; }
        .title { height: 18px; display: flex; align-items: center; padding: 0 2px 0 2px; gap: 2px; background: linear-gradient(90deg, #0a246a, #a6caf0); color: #fff; }
        .title b { flex: 1; letter-spacing: 1px; white-space: pre; padding-bottom: 2px; }
        .title span { font-weight: normal; }
        .band { margin-top: 1px; height: 42px; display: flex; align-items: center; background: linear-gradient(90deg, #a80000, #e60000 85%); color: #fff; font-weight: bold; letter-spacing: 1px; white-space: pre; }
        .band svg { margin: -1px 10px 0 5px; }
        .band span { padding-top: 7px; }
        .focus { margin: 25px 0 0 47px; width: 448px; height: 38px; padding: 1px; border: 1px solid #000; }
        .focus div { height: 34px; border: 1px dotted #000; padding: 2px 0 0 4px; }
        .second { margin: 5px 0 0 54px; }
        .more { display: flex; gap: 7px; margin: 20px 0 0 10px; line-height: 16px; }
        .more i { width: 19px; height: 21px; display: flex; align-items: center; justify-content: center; border: 1px solid; border-color: #fff #404040 #404040 #fff; box-shadow: inset -1px -1px #808080; }
        .full { font-feature-settings: normal; }
      </style>
      <div class="title">${svg('shield')}<b>Windows <span>安全</span></b><close-button></close-button></div>
      <div class="band">${svg('shield', 32)}<span>Windows 无法验证此驱动程序软件的发布者</span></div>
      <div class="focus"><div><command-link>不安装此驱动程序软件(<u>N</u>)<span slot="desc">应查看制造商的网站<span class="full">，</span>获得设备的更新驱动程序软件。</span></command-link></div></div>
      <command-link class="second">始终安装此驱动程序软件(<u>I</u>)<span slot="desc">仅安装来自制造商网站或光盘的驱动程序软件。其他来源的未签名软件可能会<br>损坏您的计算机或窃取信息。</span></command-link>
      <div class="more"><i><svg width="9" height="5"><path d="M0 0h9L4.500 5z"/></svg></i><span>查看详细信息(<u>D</u>)</span></div>`;
  }
}

class MarkBox extends ShadowElement {
  view() {
    return `<style>:host { border: 4px solid #f00; box-shadow: 2px 3px 6px rgba(0,0,0,.5), inset 2px 3px 5px rgba(0,0,0,.4); }</style>`;
  }
}

class FlowArrows extends ShadowElement {
  view() {
    const arrows = [
      [478, 119.5, 589, 119.5],
      [947, 260, 1144, 269.5],
      [1244, 388, 1062, 700],
      [833, 728.5, 527, 666],
      [500, 705, 504, 905],
      [831, 1071, 319, 1357]
    ];
    const draw = ([x1, y1, x2, y2]) => {
      const len = Math.hypot(x2 - x1, y2 - y1);
      const deg = Math.atan2(y2 - y1, x2 - x1) * 180 / Math.PI;
      return `<g transform="translate(${x1} ${y1}) rotate(${deg})"><path d="M0 0H${len - 16}" stroke="#000" stroke-width="3" stroke-linecap="round"/><path d="M${len} 0l-23.500-8 5.500 8-5.500 8z"/></g>`;
    };
    return `
      <style>:host { left: 0; top: 0; pointer-events: none; } svg { filter: drop-shadow(2px 3px 2px rgba(0,0,0,.45)); }</style>
      <svg width="1405" height="1505">${arrows.map(draw).join('')}</svg>`;
  }
}

class NoteText extends ShadowElement {
  view() {
    return `<style>:host { color: #00f; font-size: 16px; line-height: 24px; letter-spacing: 1.500px; font-feature-settings: normal; white-space: nowrap; }</style><slot></slot>`;
  }
}

class WaterMark extends ShadowElement {
  view() {
    return `<style>:host { font: 17px/22px Roboto, "Noto Sans", sans-serif; font-feature-settings: normal; letter-spacing: .25px; color: #a3a3a3; white-space: nowrap; }</style><slot></slot>`;
  }
}

customElements.define('page-canvas', PageCanvas);
customElements.define('desk-top', DeskTop);
customElements.define('context-menu', ContextMenu);
customElements.define('menu-item', MenuItem);
customElements.define('menu-sep', MenuSep);
customElements.define('tree-view', TreeView);
customElements.define('tree-item', TreeItem);
customElements.define('mmc-window', MmcWindow);
customElements.define('close-button', CloseButton);
customElements.define('wizard-window', WizardWindow);
customElements.define('push-button', PushButton);
customElements.define('command-link', CommandLink);
customElements.define('browse-form', BrowseForm);
customElements.define('progress-bar', ProgressBar);
customElements.define('security-dialog', SecurityDialog);
customElements.define('mark-box', MarkBox);
customElements.define('flow-arrows', FlowArrows);
customElements.define('note-text', NoteText);
customElements.define('water-mark', WaterMark);
</script>
</body>
</html>
